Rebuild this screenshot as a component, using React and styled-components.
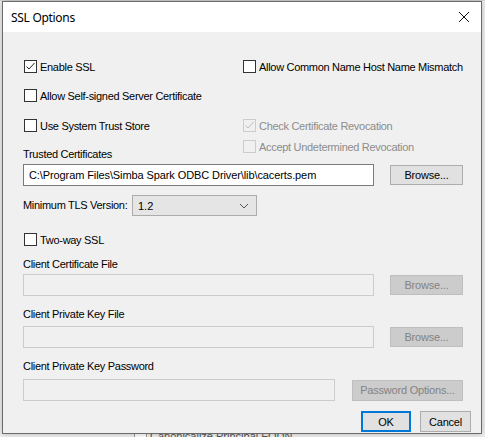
import React from 'react'
import styled, {createGlobalStyle, css} from 'styled-components'

const GlobalStyle = createGlobalStyle`
	html, body {
		margin: 0;
		padding: 0;
		background: #f3f3f3;
	}
	body {
		font-family: 'Liberation Sans', Arial, sans-serif;
		font-size: 11px;
		color: #000;
	}
`

// Desktop & windows

const Desktop = styled.div`
	position: relative;
	width: 485px;
	height: 437px;
	overflow: hidden;
	background: #f0f0f0;
`

const BehindWindow = styled.div`
	position: absolute;
	left: 0;
	top: 0;
	width: 485px;
	height: 437px;
	background: #f0f0f0;
	border-top: 1px solid #d6d6d6;
`

const BehindText = styled.div`
	position: absolute;
	left: 134px;
	top: 428px;
	color: #555;
	font-size: 11px;
	display: flex;
	align-items: center;
	gap: 3px;
`

const BehindBox = styled.span`
	width: 11px;
	height: 11px;
	border: 1px solid #999;
	background: #fff;
`

const Window = styled.div`
	position: absolute;
	left: 2px;
	top: 1px;
	width: 478px;
	height: 431px;
	border: 1px solid #6b6b6b;
	background: #f0f0f0;
	box-shadow: 0 0 6px rgba(0, 0, 0, 0.25);
	display: flex;
	flex-direction: column;
`

const TitleBar = styled.div`
	height: 30px;
	background: #fff;
	display: flex;
	align-items: center;
	justify-content: space-between;
	padding: 0 11px 0 8px;
`

const Title = styled.span`
	font-family: 'Noto Sans', 'Liberation Sans', sans-serif;
	font-size: 12px;
	letter-spacing: -0.3px;
	margin-top: 1px;
`

const Body = styled.div`
	flex: 1;
	padding: 28px 0 0 20px;
	display: flex;
	flex-direction: column;
`

// Controls

const Top = styled.div`
	display: flex;
`

const Column = styled.div`
	display: flex;
	flex-direction: column;
	width: ${p => p.w}px;
`

const Check = styled.label`
	display: flex;
	align-items: center;
	height: 13px;
	margin-top: ${p => p.mt || 0}px;
	margin-left: 1px;
	color: ${p => (p.disabled ? '#8c8c8c' : '#000')};
	white-space: nowrap;
	letter-spacing: -0.3px;
`

const Box = styled.span`
	box-sizing: border-box;
	width: 13px;
	height: 13px;
	border: 1px solid ${p => (p.disabled ? '#cccccc' : '#333333')};
	background: ${p => (p.disabled ? '#f0f0f0' : '#fff')};
	margin-right: 3px;
	display: flex;
	align-items: center;
	justify-content: center;
	flex: none;
`

const Label = styled.div`
	height: 13px;
	line-height: 13px;
	margin-top: ${p => p.mt || 0}px;
	width: ${p => (p.w ? `${p.w}px` : 'auto')};
	white-space: nowrap;
	letter-spacing: -0.3px;
`

const FieldRow = styled.div`
	display: flex;
	align-items: center;
	margin-top: ${p => p.mt || 0}px;
`

const Input = styled.div`
	box-sizing: border-box;
	width: ${p => p.w}px;
	height: 22px;
	padding: 0 5px;
	display: flex;
	align-items: center;
	letter-spacing: -0.1px;
	white-space: nowrap;
	background: ${p => (p.disabled ? '#f0f0f0' : '#fff')};
	border: 1px solid ${p => (p.disabled ? '#cccccc' : '#7a7a7a')};
`

const Button = styled.div`
	box-sizing: border-box;
	width: ${p => p.w}px;
	height: ${p => p.h || 20}px;
	margin-left: ${p => p.ml || 0}px;
	display: flex;
	align-items: center;
	justify-content: center;
	letter-spacing: -0.2px;
	background: #e1e1e1;
	border: 1px solid #adadad;
	${p =>
		p.disabled &&
		css`
			background: #cccccc;
			border-color: #bfbfbf;
			color: #838383;
		`}
	${p =>
		p.primary &&
		css`
			border: 2px solid #0078d7;
		`}
`

const Select = styled.div`
	box-sizing: border-box;
	width: 125px;
	height: 21px;
	padding: 0 7px 0 5px;
	display: flex;
	align-items: center;
	justify-content: space-between;
	background: #e5e5e5;
	border: 1px solid #acacac;
`

const Footer = styled.div`
	display: flex;
	justify-content: flex-end;
	gap: 9px;
	margin-top: 10px;
	padding-right: 10px;
`

const CheckMark = ({color}) => (
	<svg width="11" height="11" viewBox="0 0 11 11">
		<path d="M1.5 5.5 L4 8 L9.5 2" fill="none" stroke={color} strokeWidth="1" />
	</svg>
)

const CheckBox = ({checked, disabled, children, mt}) => (
	<Check mt={mt} disabled={disabled}>
		<Box disabled={disabled}>{checked && <CheckMark color={disabled ? '#bcbcbc' : '#222'} />}</Box>
		{children}
	</Check>
)

const Close = () => (
	<svg width="12" height="12" viewBox="0 0 12 12">
		<path d="M1 1 L11 11 M11 1 L1 11" stroke="#111" strokeWidth="1" />
	</svg>
)

const Chevron = () => (
	<svg width="10" height="6" viewBox="0 0 10 6">
		<path d="M1 1 L5 5 L9 1" fill="none" stroke="#555" strokeWidth="1" />
	</svg>
)

export default function App() {
	return (
		<Desktop>
			<GlobalStyle />
			<BehindWindow>
				<BehindText>
					<BehindBox />
					Canonicalize Principal FQDN
				</BehindText>
			</BehindWindow>
			<Window>
				<TitleBar>
					<Title>SSL Options</Title>
					<Close />
				</TitleBar>
				<Body>
					<Top>
						<Column w={219}>
							<CheckBox checked>Enable SSL</CheckBox>
							<CheckBox mt={16}>Allow Self-signed Server Certificate</CheckBox>
							<CheckBox mt={17}>Use System Trust Store</CheckBox>
							<Label mt={16}>Trusted Certificates</Label>
						</Column>
						<Column w={230}>
							<CheckBox>Allow Common Name Host Name Mismatch</CheckBox>
							<CheckBox mt={46} checked disabled>
								Check Certificate Revocation
							</CheckBox>
							<CheckBox mt={8} disabled>
								Accept Undetermined Revocation
							</CheckBox>
						</Column>
					</Top>
					<FieldRow mt={3}>
						<Input w={351}>C:\Program Files\Simba Spark ODBC Driver\lib\cacerts.pem</Input>
						<Button w={73} ml={16}>
							Browse...
						</Button>
					</FieldRow>
					<FieldRow mt={9}>
						<Label w={109}>Minimum TLS Version:</Label>
						<Select>
							<span>1.2</span>
							<Chevron />
						</Select>
					</FieldRow>
					<CheckBox mt={17}>Two-way SSL</CheckBox>
					<Label mt={12}>Client Certificate File</Label>
					<FieldRow mt={3}>
						<Input w={351} disabled />
						<Button w={73} ml={16} disabled>
							Browse...
						</Button>
					</FieldRow>
					<Label mt={12}>Client Private Key File</Label>
					<FieldRow mt={5}>
						<Input w={351} disabled />
						<Button w={73} ml={16} disabled>
							Browse...
						</Button>
					</FieldRow>
					<Label mt={12}>Client Private Key Password</Label>
					<FieldRow mt={6}>
						<Input w={312} disabled />
						<Button w={111} ml={17} h={21} disabled>
							Password Options...
						</Button>
					</FieldRow>
					<Footer>
						<Button w={50} h={21} primary>
							OK
						</Button>
						<Button w={51} h={21}>
							Cancel
						</Button>
					</Footer>
				</Body>
			</Window>
		</Desktop>
	)
}
